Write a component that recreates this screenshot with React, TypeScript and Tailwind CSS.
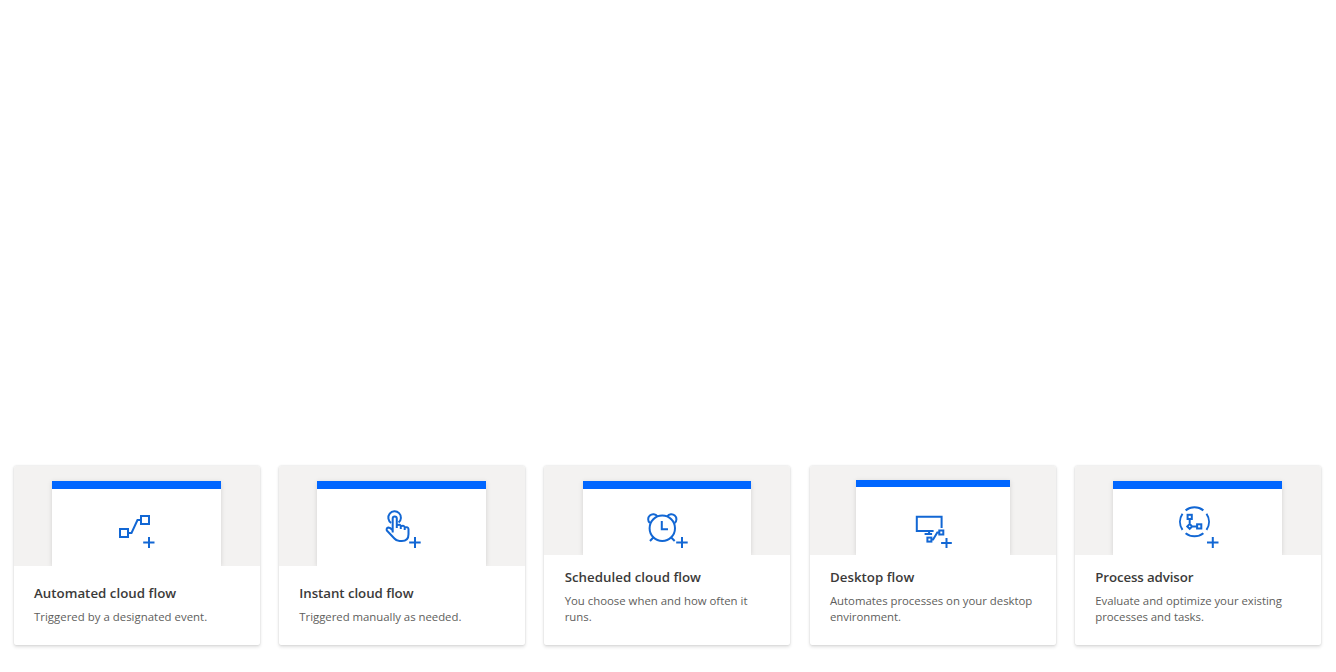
import type { ReactNode } from "react";

type Flow = {
  title: string;
  lines: string[];
  viewBox: string;
  imageClass: string;
  panelClass: string;
  barClass: string;
  titleClass: string;
  textClass: string;
  icon: ReactNode;
};

const flows: Flow[] = [
  {
    title: "Automated cloud flow",
    lines: ["Triggered by a designated event."],
    viewBox: "52 489 168.4 77",
    imageClass: "h-[100px] pt-[15px] pr-px",
    panelClass: "w-[168.4px]",
    barClass: "h-2",
    titleClass: "tracking-[0.02px]",
    textClass: "tracking-[0.02px]",
    icon: (
      <>
        <rect x="120" y="529" width="8" height="8" />
        <rect x="141" y="516" width="8" height="8" />
        <path d="M128 533H131.5L137.5 520H141" />
        <path d="M149 537V548M143.2 542.5H154.5" />
      </>
    ),
  },
  {
    title: "Instant cloud flow",
    lines: ["Triggered manually as needed."],
    viewBox: "317 489 168.4 77",
    imageClass: "h-[100px] pt-[15px] pr-px",
    panelClass: "w-[168.4px]",
    barClass: "h-2",
    titleClass: "tracking-[-0.06px]",
    textClass: "tracking-[-0.03px]",
    icon: (
      <>
        <path d="M391.2 522.9A6.3 6.3 0 1 1 398.6 522.5" />
        <path d="M392.7 532.6V518.5A2 2 0 0 1 396.8 518.5V528M396.8 525.2Q400.6 523.8 400.8 526.5V529M400.8 526.2Q404.5 524.8 404.7 527.7V530M404.7 527.4Q408.3 526.5 408.5 529V534.2Q408.5 541 401.8 541H399.5Q396.5 541 394.4 538.5L386.8 530.4Q386.1 528.2 388.4 527.5Q390.2 527.4 392.7 530.4" />
        <path d="M415 537V548M409.2 542.5H420.7" />
      </>
    ),
  },
  {
    title: "Scheduled cloud flow",
    lines: ["You choose when and how often it", "runs."],
    viewBox: "583 489 168.4 66",
    imageClass: "h-[89px] pt-[15px] pr-px",
    panelClass: "w-[168.4px]",
    barClass: "h-2",
    titleClass: "tracking-[0.02px]",
    textClass: "tracking-[-0.01px]",
    icon: (
      <>
        <circle cx="662.3" cy="528.2" r="12.7" />
        <path d="M649.9 523A5 5 0 1 1 657.3 516.4M667.3 516.4A5 5 0 1 1 674.7 523" />
        <path d="M661.8 521V529.2H668M653.8 537L650 541M670.7 537L674.7 541" />
        <path d="M682 537V548M676.2 542.5H687.7" />
      </>
    ),
  },
  {
    title: "Desktop flow",
    lines: ["Automates processes on your desktop", "environment."],
    viewBox: "855.9 487 154 68",
    imageClass: "h-[89px] pt-[14px]",
    panelClass: "w-[154px]",
    barClass: "h-[7px]",
    titleClass: "tracking-[0.02px]",
    textClass: "tracking-[-0.03px]",
    icon: (
      <>
        <path d="M941.5 528V516.7H916.7V531H933.5M929 531V534M924.5 534H932" />
        <rect x="927.3" y="537.6" width="4" height="4" />
        <rect x="939.2" y="530.5" width="4" height="4" />
        <path d="M931.3 539.6H933L937.2 532.5H939.2" />
        <path d="M946.4 538V548M941 543H951.7" />
      </>
    ),
  },
  {
    title: "Process advisor",
    lines: ["Evaluate and optimize your existing", "processes and tasks."],
    viewBox: "1113.2 489 168.4 66",
    imageClass: "h-[89px] pt-[15px] pr-px",
    panelClass: "w-[168.4px]",
    barClass: "h-2",
    titleClass: "tracking-[-0.12px]",
    textClass: "tracking-[-0.04px]",
    icon: (
      <>
        <path d="M1185.8 510.4A14.4 14.4 0 0 1 1203.6 510.4M1206.7 513.7A14.4 14.4 0 0 1 1206.7 529.9M1203.6 533.2A14.4 14.4 0 0 1 1185.8 533.2M1182.7 529.9A14.4 14.4 0 0 1 1182.7 513.7" />
        <rect x="1187.8" y="514.8" width="4.2" height="4.2" />
        <rect x="1197.3" y="524.3" width="4.2" height="4.2" />
        <path d="M1189.9 519V524L1187.5 526.4L1189.9 528.8L1192.3 526.4L1189.9 524M1192.3 526.4H1197.3" />
        <path d="M1213 537V548M1207.2 542.5H1218.7" />
      </>
    ),
  },
];

function FlowCard({ flow }: { flow: Flow }) {
  return (
    <article className="flex h-[179px] flex-col overflow-hidden rounded-[2px] bg-white shadow-[0_1.6px_3.6px_rgba(0,0,0,0.13),0_0_2px_rgba(0,0,0,0.13)]">
      <div className={`flex shrink-0 justify-center overflow-hidden bg-[#f3f2f1] ${flow.imageClass}`}>
        <div className={`flex flex-col bg-white shadow-[0_1px_5px_rgba(0,0,0,0.13)] ${flow.panelClass}`}>
          <div className={`shrink-0 bg-[#0066ff] ${flow.barClass}`} />
          <svg
            viewBox={flow.viewBox}
            className="min-h-0 w-full flex-1"
            fill="none"
            stroke="#1267d4"
            strokeWidth="2"
            aria-hidden="true"
          >
            {flow.icon}
          </svg>
        </div>
      </div>
      <div className="flex flex-1 flex-col justify-end gap-1.5 pb-5 pl-[20.2px]">
        <h2 className={`text-[13.3px]/5 font-semibold whitespace-nowrap text-[#3b3a39] ${flow.titleClass}`}>
          {flow.title}
        </h2>
        <p className={`flex flex-col text-[11.4px]/4 whitespace-nowrap text-[#605e5c] ${flow.textClass}`}>
          {flow.lines.map((line) => (
            <span key={line}>{line}</span>
          ))}
        </p>
      </div>
    </article>
  );
}

export default function App() {
  return (
    <main className="flex h-[672px] flex-col justify-end bg-white pr-[14.9px] pb-[27px] pl-[13.8px] font-['Open_Sans','Noto_Sans',sans-serif]">
      <section className="grid grid-cols-5 gap-[19.3px]">
        {flows.map((flow) => (
          <FlowCard key={flow.title} flow={flow} />
        ))}
      </section>
    </main>
  );
}
